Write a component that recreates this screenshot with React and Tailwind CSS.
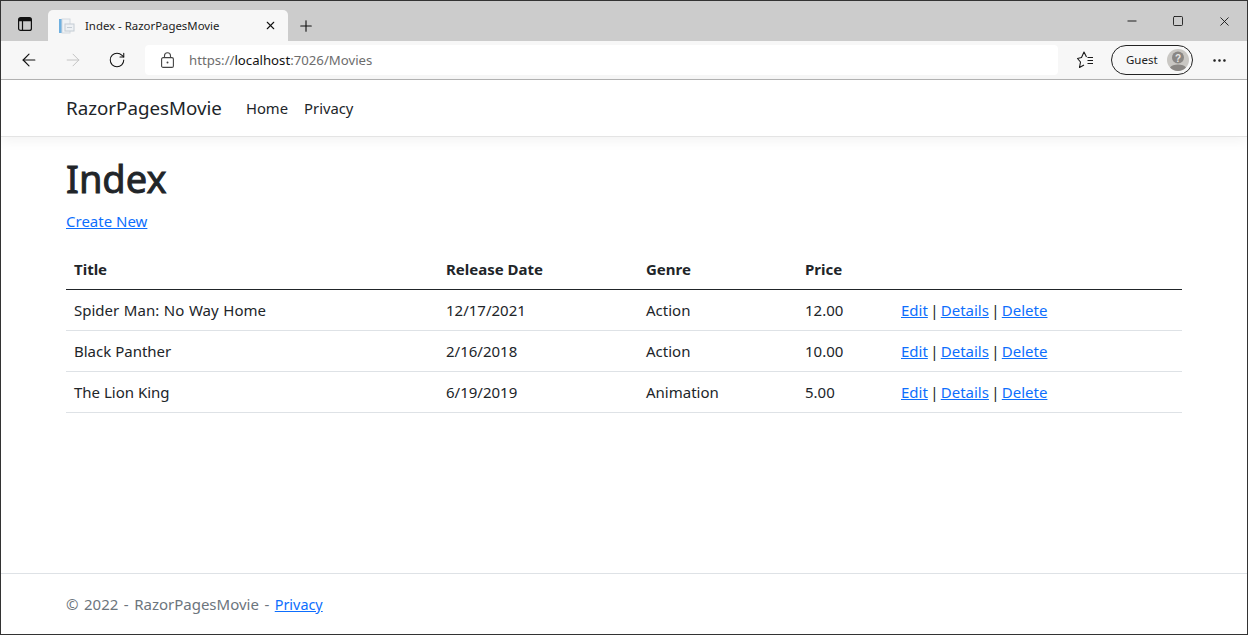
import { ArrowLeft, ArrowRight, RotateCw, Plus, X, Minus, Square, MoreHorizontal } from 'lucide-react';

const MOVIES = [
  { title: 'Spider Man: No Way Home', date: '12/17/2021', genre: 'Action', price: '12.00', fit: '[word-spacing:0.75px]' },
  { title: 'Black Panther', date: '2/16/2018', genre: 'Action', price: '10.00', fit: '' },
  { title: 'The Lion King', date: '6/19/2019', genre: 'Animation', price: '5.00', fit: '' },
];

const FONT = "font-['Noto_Sans','Open_Sans',sans-serif]";
const LINK = 'text-[#0d6efd] underline';

function TabPageIcon() {
  return (
    <svg width="16" height="16" viewBox="0 0 16 16" className="shrink-0">
      <rect x="0" y="1" width="3" height="14" fill="#6fb0e0" />
      <rect x="3" y="1" width="8" height="14" fill="#f0f3f6" stroke="#d4dae0" strokeWidth="1" />
      <rect x="6" y="6" width="9" height="7" fill="#eef1f4" stroke="#c4ccd4" strokeWidth="1" />
      <rect x="8" y="9" width="5" height="1" fill="#c4ccd4" />
    </svg>
  );
}

function LockIcon() {
  return (
    <svg width="13" height="16" viewBox="0 0 13 16" fill="none" stroke="#444" strokeWidth="1.1" className="shrink-0">
      <rect x="0.6" y="5.6" width="11.8" height="9.8" rx="1.5" />
      <path d="M3.5 5.5 V3.8 A3 3 0 0 1 9.5 3.8 V5.5" />
      <circle cx="6.5" cy="10.5" r="1" fill="#444" stroke="none" />
    </svg>
  );
}

function FavoritesIcon() {
  return (
    <svg width="18" height="18" viewBox="0 0 18 18" fill="none" stroke="#1a1a1a" strokeWidth="1.1">
      <path d="M10.5 6 L8 1 L5.5 6.5 L1.5 7.5 L4.5 11 L3.5 16.5 L8 14" strokeLinejoin="round" />
      <path d="M11.5 6.5 H17 M11.5 9.5 H17 M11.5 12.5 H17" />
    </svg>
  );
}

function GuestAvatar() {
  return (
    <svg width="22" height="22" viewBox="0 0 22 22" className="shrink-0">
      <circle cx="11" cy="11" r="11" fill="#c9c7c3" />
      <circle cx="11" cy="8.5" r="6" fill="#8a8784" />
      <path d="M3 18.5 C5 14.5 17 14.5 19 18.5 A11 11 0 0 1 3 18.5 Z" fill="#8a8784" />
      <text x="11" y="12.5" textAnchor="middle" fontSize="10" fontWeight="700" fill="#e8e6e3" fontFamily="Liberation Sans, sans-serif">?</text>
    </svg>
  );
}

function BrowserChrome() {
  return (
    <div className="shrink-0">
      {/* Tab strip */}
      <div className="flex h-[40px] items-end bg-[#cccccc]">
        <div className="flex h-[31px] w-[47px] items-center justify-center pb-1">
          <svg width="14" height="14" viewBox="0 0 14 14" fill="none" stroke="#111" strokeWidth="1.2">
            <rect x="0.6" y="0.6" width="12.8" height="12.8" rx="2" />
            <path d="M0.6 3.6 H13.4 M4.5 3.6 V13.4" />
            <rect x="1" y="1" width="12" height="2.5" fill="#111" stroke="none" />
          </svg>
        </div>
        <div className="flex h-[31px] w-[240px] items-center rounded-t-[5px] bg-[#f7f7f7] pl-[11px] pr-[11px]">
          <TabPageIcon />
          <span className="ml-[10px] flex-1 text-[11.4px] text-[#222]">Index - RazorPagesMovie</span>
          <X size={13} strokeWidth={2} className="text-[#111]" />
        </div>
        <div className="flex h-[31px] w-[36px] items-center justify-center">
          <Plus size={18} strokeWidth={1.5} className="text-[#111]" />
        </div>
        <div className="flex-1" />
        <div className="flex h-[40px] items-center text-[#111]">
          <div className="flex w-[46px] justify-center"><Minus size={14} strokeWidth={1.6} /></div>
          <div className="flex w-[46px] justify-center"><Square size={12} strokeWidth={1.7} /></div>
          <div className="flex w-[46px] justify-center"><X size={15} strokeWidth={1.4} /></div>
        </div>
      </div>
      {/* Toolbar */}
      <div className="box-content flex h-[38px] items-center border-b border-[#b4b4b4] bg-[#f7f7f7]">
        <div className="flex w-[144px] items-center pl-[18px]">
          <ArrowLeft size={20} strokeWidth={1.4} className="text-[#111]" />
          <ArrowRight size={20} strokeWidth={1.2} className="ml-[24px] text-[#c4c4c4]" />
          <RotateCw size={18} strokeWidth={1.4} className="ml-[25px] text-[#111]" />
        </div>
        <div className="flex h-[30px] w-[913px] items-center rounded-[4px] bg-white pl-[16px] text-[13.2px]">
          <LockIcon />
          <span className="ml-[15px] pt-[1px] text-[#6d6d6d]">https://<span className="text-[#111]">localhost</span>:7026/Movies</span>
        </div>
        <div className="ml-[18px] flex w-[18px] justify-center"><FavoritesIcon /></div>
        <div className="ml-[17px] flex h-[30px] w-[82px] items-center justify-between rounded-full border border-[#222] pl-[14px] pr-[3px] text-[11.5px] text-[#222]">
          <span>Guest</span>
          <GuestAvatar />
        </div>
        <div className="ml-[17px] flex w-[18px] justify-center"><MoreHorizontal size={17} strokeWidth={1.6} className="text-[#111]" /></div>
      </div>
    </div>
  );
}

export default function App() {
  return (
    <div className={`flex h-[635px] w-[1248px] flex-col overflow-hidden border border-[#333] bg-white text-[#212529] ${FONT}`}>
      <BrowserChrome />

      {/* Navbar */}
      <header className="flex h-[57px] shrink-0 items-center border-b border-[#e4e4e4] px-[65px] shadow-[0_4px_12px_rgba(0,0,0,0.05)]">
        <span className="text-[18.75px]">RazorPagesMovie</span>
        <nav className="ml-[24px] flex gap-[16px] text-[14.8px]">
          <span>Home</span>
          <span>Privacy</span>
        </nav>
      </header>

      {/* Page */}
      <main className="flex-1 px-[65px]">
        <h1 className="mt-[14px] text-[38px] leading-[54px] [-webkit-text-stroke:0.9px_#212529]">Index</h1>
        <div className="mt-[4px] text-[15px] leading-[24px]"><a className={LINK}>Create New</a></div>
        <table className="mt-[15px] w-[1116px] table-fixed border-collapse text-left text-[15px]">
          <thead>
            <tr className="h-[41px] border-b border-[#212529]">
              <th className="w-[372px] px-2 pt-[1px] font-bold">Title</th>
              <th className="w-[200px] px-2 pt-[1px] font-bold">Release Date</th>
              <th className="w-[159px] px-2 pt-[1px] font-bold">Genre</th>
              <th className="w-[96px] px-2 pt-[1px] font-bold">Price</th>
              <th />
            </tr>
          </thead>
          <tbody>
            {MOVIES.map(m => (
              <tr key={m.title} className="h-[41px] border-b border-[#dee2e6]">
                <td className={`px-2 pt-[1px] ${m.fit}`}>{m.title}</td>
                <td className="px-2 pt-[1px]">{m.date}</td>
                <td className="px-2 pt-[1px]">{m.genre}</td>
                <td className="px-2 pt-[1px]">{m.price}</td>
                <td className="px-2 pt-[1px] [word-spacing:-1.6px]">
                  <a className={LINK}>Edit</a> | <a className={LINK}>Details</a> | <a className={LINK}>Delete</a>
                </td>
              </tr>
            ))}
          </tbody>
        </table>
      </main>

      {/* Footer */}
      <footer className="flex h-[61px] shrink-0 items-center border-t border-[#dee2e6] px-[65px] text-[15px] text-[#6c757d]">
        <span className="[word-spacing:1.6px]">© 2022 - RazorPagesMovie - <a className={`${LINK} text-[14.4px]`}>Privacy</a></span>
      </footer>
    </div>
  );
}
